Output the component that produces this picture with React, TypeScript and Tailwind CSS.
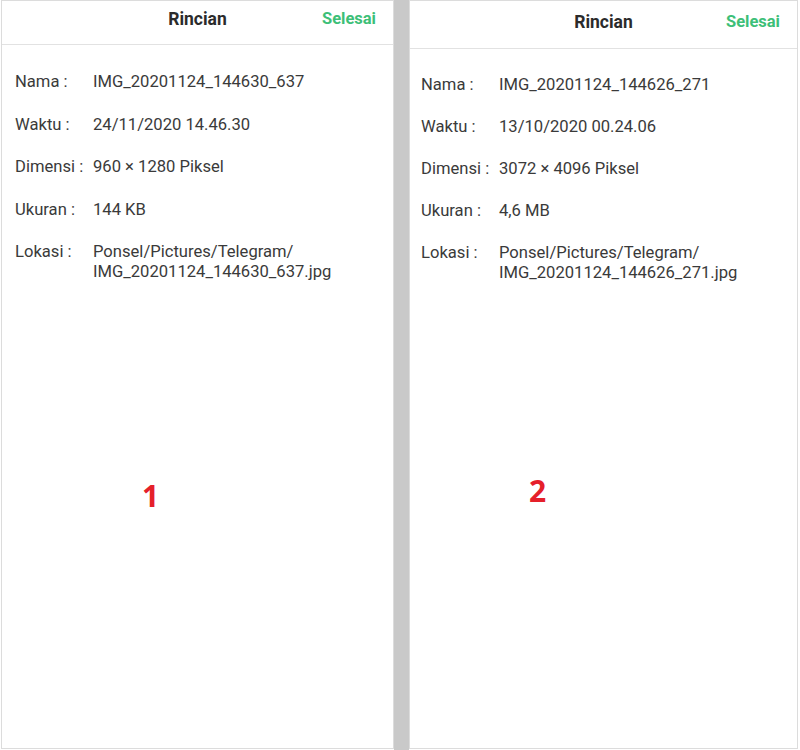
import React from "react";

interface Row {
    label: string;
    value: string[];
}

interface PanelProps {
    rows: Row[];
    marker: string;
    className?: string;
    headerClass: string;
    bodyClass: string;
    markerClass: string;
}

const Panel: React.FC<PanelProps> = ({ rows, marker, className = "", headerClass, bodyClass, markerClass }) => {
    return (
        <div className={`flex flex-col bg-white border border-[#dcdcdc] ${className}`}>
            {/* Header */}
            <div className={`relative flex items-center justify-center border-b border-[#e2e2e2] ${headerClass}`}>
                <span className="text-[17.5px] font-bold text-[#2b2b2b]">Rincian</span>
                <span className="absolute right-[17px] text-[16.5px] font-bold text-[#3dbf78]">Selesai</span>
            </div>

            {/* Detail rows */}
            <div className={`flex flex-col ${bodyClass}`}>
                {rows.map((row) => (
                    <div key={row.label} className="flex text-[16.6px] leading-[20px] text-[#3a3a3a]">
                        <span className="w-[78px] shrink-0">{row.label}</span>
                        <div className="flex flex-col">
                            {row.value.map((line) => (
                                <span key={line}>{line}</span>
                            ))}
                        </div>
                    </div>
                ))}
            </div>

            {/* Number marker */}
            <div className={`flex ${markerClass}`}>
                <span className="text-[30px] font-bold leading-none text-[#e5202a]" style={{ fontFamily: "'Open Sans', 'Liberation Sans', sans-serif" }}>
                    {marker}
                </span>
            </div>
        </div>
    );
};

const first: Row[] = [
    { label: "Nama :", value: ["IMG_20201124_144630_637"] },
    { label: "Waktu :", value: ["24/11/2020 14.46.30"] },
    { label: "Dimensi :", value: ["960 × 1280 Piksel"] },
    { label: "Ukuran :", value: ["144 KB"] },
    { label: "Lokasi :", value: ["Ponsel/Pictures/Telegram/", "IMG_20201124_144630_637.jpg"] },
];

const second: Row[] = [
    { label: "Nama :", value: ["IMG_20201124_144626_271"] },
    { label: "Waktu :", value: ["13/10/2020 00.24.06"] },
    { label: "Dimensi :", value: ["3072 × 4096 Piksel"] },
    { label: "Ukuran :", value: ["4,6 MB"] },
    { label: "Lokasi :", value: ["Ponsel/Pictures/Telegram/", "IMG_20201124_144626_271.jpg"] },
];

export default function App() {
    return (
        <div className="flex w-[800px] h-[750px] bg-white" style={{ fontFamily: "Roboto, 'Liberation Sans', sans-serif" }}>
            <Panel
                rows={first}
                marker="1"
                className="ml-[1px] w-[393px] h-[749px]"
                headerClass="h-[44px] pb-[6px]"
                bodyClass="px-[13px] pt-[27px] gap-[22.5px]"
                markerClass="pt-[199px] pl-[140px]"
            />
            <div className="w-[15px] h-[750px] bg-[#c9c9c9]" />
            <Panel
                rows={second}
                marker="2"
                className="w-[389px] h-[749px]"
                headerClass="h-[48px] pb-[4px]"
                bodyClass="px-[11px] pt-[26px] gap-[22px]"
                markerClass="pt-[193px] pl-[119px]"
            />
        </div>
    );
}
